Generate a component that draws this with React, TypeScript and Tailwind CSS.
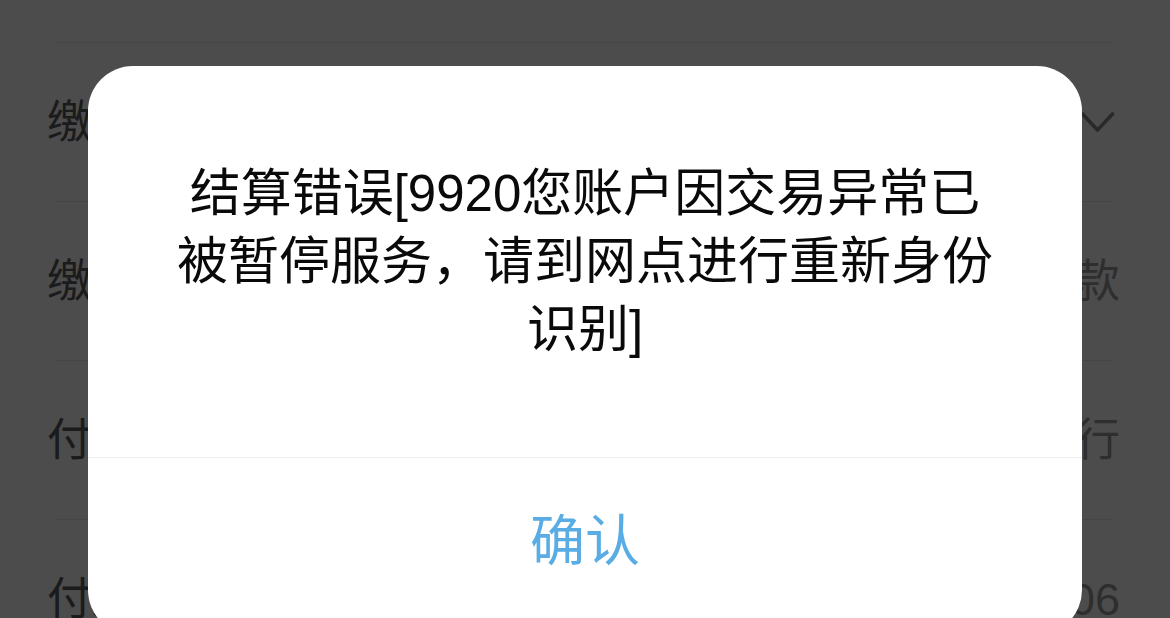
import React from "react";

const rows = [
  { label: "缴费项目", value: null },
  { label: "缴费方式", value: "线上缴款" },
  { label: "付款银行", value: "中国建设银行" },
  { label: "付款时间", value: "2024-05-06" },
];

function ChevronDown() {
  return (
    <svg width="35" height="24" viewBox="0 0 35 24" fill="none" className="-mr-[2px] mt-[2px] shrink-0">
      <polyline
        points="2.5,3 17.5,19 32.5,3"
        stroke="#8a8a8a"
        strokeWidth="3.6"
        strokeLinecap="round"
        strokeLinejoin="round"
      />
    </svg>
  );
}

export default function App() {
  return (
    <div className="relative h-[618px] w-full overflow-hidden bg-white font-['Liberation_Sans','Noto_Sans_CJK_SC',sans-serif]">
      {/* page behind the dialog */}
      <div className="pt-[42px]">
        {rows.map((r) => (
          <div
            key={r.label}
            className="ml-[55px] mr-[57px] flex h-[159px] items-center justify-between border-t border-[#e6e6e6]"
          >
            <span className="-ml-[8px] text-[45px] leading-none text-[#5a5a5a]">{r.label}</span>
            {r.value ? (
              <span className="-mr-[7px] text-[45px] leading-none text-[#9c9c9c]">{r.value}</span>
            ) : (
              <ChevronDown />
            )}
          </div>
        ))}
      </div>

      {/* mask + alert */}
      <div className="absolute inset-0 bg-black/70">
        <div className="mx-auto mt-[66px] w-[994px] overflow-hidden rounded-[45px] bg-white">
          <p className="px-[84px] pt-[94px] pb-[93px] text-center text-[51px] leading-[68px] text-[#0a0a0a]">
            结算错误[9920您账户因交易异常已被暂停服务，请到网点进行重新身份识别]
          </p>
          <div className="flex h-[178px] items-center justify-center border-t border-[#efefef] pb-[10px] text-[55px] leading-none text-[#5aade4]">
            确认
          </div>
        </div>
      </div>
    </div>
  );
}
